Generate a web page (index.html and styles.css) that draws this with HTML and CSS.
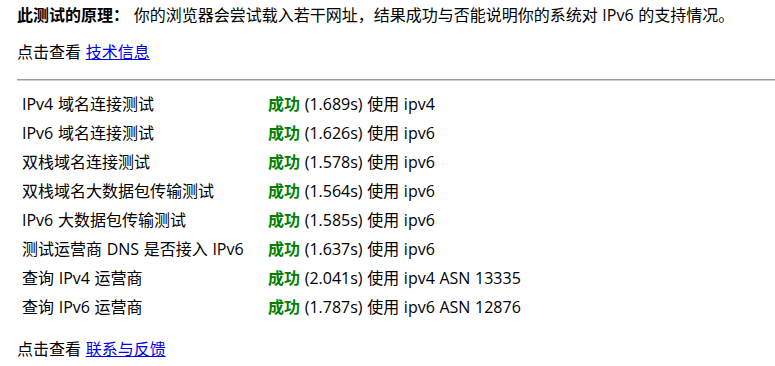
FILE: index.html
```html
<!DOCTYPE html>
<html lang="zh-CN">
<head>
<meta charset="utf-8">
<title>IPv6 测试</title>
<link rel="stylesheet" href="styles.css">
</head>
<body>
<div class="page">
  <p class="intro"><b class="label">此测试的原理：</b> 你的浏览器会尝试载入若干网址，结果成功与否能说明你的系统对 IPv6 的支持情况。</p>
  <p class="more">点击查看 <a href="#" class="link">技术信息</a></p>
  <hr class="rule">
  <table class="results">
    <tr><td class="name">IPv4 域名连接测试</td><td class="val"><b class="ok">成功</b> (1.689s) 使用 ipv4</td></tr>
    <tr><td class="name">IPv6 域名连接测试</td><td class="val"><b class="ok">成功</b> (1.626s) 使用 ipv6</td></tr>
    <tr><td class="name">双栈域名连接测试</td><td class="val"><b class="ok">成功</b> (1.578s) 使用 ipv6</td></tr>
    <tr><td class="name">双栈域名大数据包传输测试</td><td class="val"><b class="ok">成功</b> (1.564s) 使用 ipv6</td></tr>
    <tr><td class="name">IPv6 大数据包传输测试</td><td class="val"><b class="ok">成功</b> (1.585s) 使用 ipv6</td></tr>
    <tr><td class="name">测试运营商 DNS 是否接入 IPv6</td><td class="val"><b class="ok">成功</b> (1.637s) 使用 ipv6</td></tr>
    <tr><td class="name">查询 IPv4 运营商</td><td class="val"><b class="ok">成功</b> (2.041s) 使用 ipv4 ASN 13335</td></tr>
    <tr><td class="name">查询 IPv6 运营商</td><td class="val"><b class="ok">成功</b> (1.787s) 使用 ipv6 ASN 12876</td></tr>
  </table>
  <p class="more">点击查看 <a href="#" class="link">联系与反馈</a></p>
</div>
</body>
</html>
```
FILE: styles.css
```css
html, body {
  margin: 0;
  padding: 0;
  background: #fff;
  overflow: hidden;
}
body {
  font-family: "Open Sans", "Noto Sans CJK SC", sans-serif;
  font-size: 16px;
  line-height: 21px;
  color: #000;
  word-spacing: 0.5px;
}
.page {
  padding: 5px 0 0 17px;
}
.intro, .more {
  margin: 0 0 16px 0;
}
.label {
  font-weight: bold;
}
.link {
  color: #0000ee;
  text-decoration: underline;
}
.rule {
  margin: 0 0 8px 0;
  height: 0;
  border: 0;
  border-top: 1px solid #9a9a9a;
  border-bottom: 1px solid #d0d0d0;
}
.results {
  border-collapse: separate;
  border-spacing: 2px;
  margin: 0 0 16px 0;
}
.results td {
  padding: 3px;
  vertical-align: middle;
  white-space: nowrap;
}
.results .name {
  width: 238px;
}
.ok {
  color: #008000;
  font-weight: bold;
}
```
